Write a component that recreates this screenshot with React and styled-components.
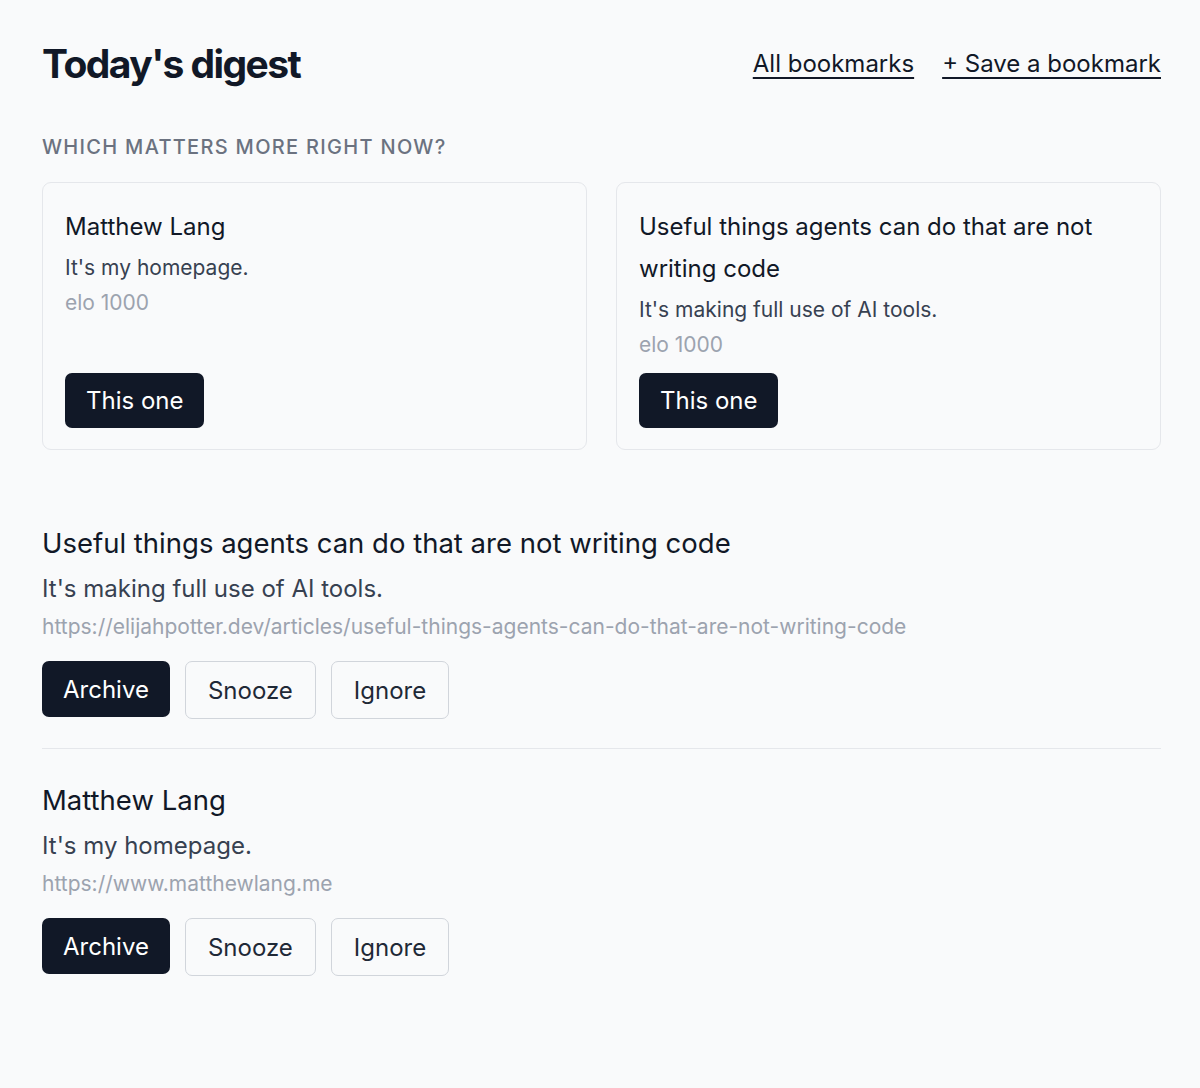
import React from 'react';
import styled, { createGlobalStyle } from "styled-components";

const GlobalStyle = createGlobalStyle`
  html, body {
    margin: 0;
    padding: 0;
    background-color: #f9fafb;
  }
  body {
    font-family: Inter, "Noto Sans", "Liberation Sans", sans-serif;
    color: #111827;
    -webkit-font-smoothing: antialiased;
  }
`;

const pair = [
  {
    id: 1,
    title: "Matthew Lang",
    description: "It's my homepage.",
    elo: 1000,
  },
  {
    id: 2,
    title: "Useful things agents can do that are not writing code",
    description: "It's making full use of AI tools.",
    elo: 1000,
  },
];

const bookmarks = [
  {
    id: 2,
    title: "Useful things agents can do that are not writing code",
    description: "It's making full use of AI tools.",
    url: "https://elijahpotter.dev/articles/useful-things-agents-can-do-that-are-not-writing-code",
  },
  {
    id: 1,
    title: "Matthew Lang",
    description: "It's my homepage.",
    url: "https://www.matthewlang.me",
  },
];

export default function App() {
  return (
    <>
      <GlobalStyle />
      <Page>
        <Header>
          <Title>Today's digest</Title>
          <Nav>
            <NavLink href="#">All bookmarks</NavLink>
            <NavLink href="#">+ Save a bookmark</NavLink>
          </Nav>
        </Header>

        <SectionLabel>Which matters more right now?</SectionLabel>
        <CardGrid>
          {pair.map((item) => (
            <Card key={item.id}>
              <CardTitle>{item.title}</CardTitle>
              <CardDescription>{item.description}</CardDescription>
              <Elo>elo {item.elo}</Elo>
              <CardFooter>
                <PickButton>This one</PickButton>
              </CardFooter>
            </Card>
          ))}
        </CardGrid>

        <List>
          {bookmarks.map((item) => (
            <Item key={item.id}>
              <ItemTitle>{item.title}</ItemTitle>
              <ItemDescription>{item.description}</ItemDescription>
              <ItemUrl>{item.url}</ItemUrl>
              <Actions>
                <ActionButton $primary>Archive</ActionButton>
                <ActionButton>Snooze</ActionButton>
                <ActionButton>Ignore</ActionButton>
              </Actions>
            </Item>
          ))}
        </List>
      </Page>
    </>
  );
}

const Page = styled.div`
  padding: 40px 39px 60px 42px;
`;

const Header = styled.header`
  display: flex;
  align-items: center;
  justify-content: space-between;
`;

const Title = styled.h1`
  margin: 0;
  font-size: 39px;
  line-height: 48px;
  font-weight: 700;
  letter-spacing: -0.04em;
  color: #111827;
`;

const Nav = styled.nav`
  display: flex;
  gap: 28px;
`;

const NavLink = styled.a`
  font-size: 24px;
  line-height: 32px;
  color: #111827;
  text-decoration: underline;
  text-underline-offset: 5px;
  text-decoration-thickness: 1.5px;
`;

const SectionLabel = styled.h2`
  margin: 45px 0 21px;
  font-size: 20px;
  line-height: 28px;
  font-weight: 500;
  letter-spacing: 0.065em;
  text-transform: uppercase;
  color: #6b7280;
`;

const CardGrid = styled.div`
  display: grid;
  grid-template-columns: 1fr 1fr;
  gap: 29px;
`;

const Card = styled.div`
  display: flex;
  flex-direction: column;
  align-items: flex-start;
  padding: 23px 22px 21px;
  border: 1px solid #e5e7eb;
  border-radius: 9px;
  background-color: #f9fafb;
`;

const CardTitle = styled.div`
  font-size: 24px;
  line-height: 42px;
  font-weight: 400;
  color: #111827;
`;

const CardDescription = styled.div`
  margin-top: 5px;
  font-size: 21px;
  line-height: 30px;
  color: #374151;
`;

const Elo = styled.div`
  margin-top: 5px;
  font-size: 21px;
  line-height: 30px;
  color: #9ca3af;
`;

const CardFooter = styled.div`
  margin-top: auto;
  padding-top: 13px;
`;

const PickButton = styled.button`
  height: 55px;
  padding: 0 21px;
  border: none;
  border-radius: 7px;
  background-color: #111827;
  color: #ffffff;
  font-family: inherit;
  font-size: 24px;
  cursor: pointer;
`;

const List = styled.div`
  margin-top: 73px;
`;

const Item = styled.div`
  padding: 0 0 29px;
  & + & {
    padding-top: 31px;
    border-top: 1px solid #e5e7eb;
  }
`;

const ItemTitle = styled.div`
  font-size: 27.5px;
  line-height: 40px;
  font-weight: 400;
  color: #111827;
`;

const ItemDescription = styled.div`
  margin-top: 9px;
  font-size: 24px;
  line-height: 34px;
  color: #374151;
`;

const ItemUrl = styled.div`
  margin-top: 7px;
  font-size: 21px;
  line-height: 28px;
  color: #9ca3af;
`;

const Actions = styled.div`
  display: flex;
  align-items: flex-start;
  gap: 15px;
  margin-top: 20px;
`;

const ActionButton = styled.button`
  height: ${(p) => (p.$primary ? "56px" : "58px")};
  padding: ${(p) => (p.$primary ? "0 21px" : "0 22px")};
  border: ${(p) => (p.$primary ? "none" : "1.5px solid #d1d5db")};
  border-radius: 7px;
  background-color: ${(p) => (p.$primary ? "#111827" : "transparent")};
  color: ${(p) => (p.$primary ? "#ffffff" : "#1f2937")};
  font-family: inherit;
  font-size: 24px;
  cursor: pointer;
`;
